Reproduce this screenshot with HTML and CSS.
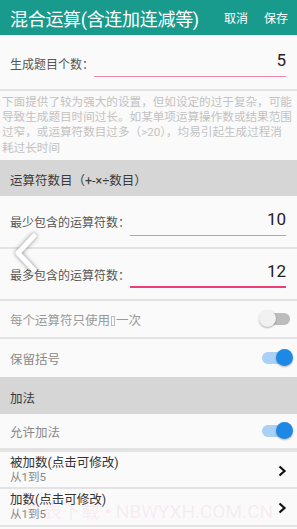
FILE: index.html
```html
<!DOCTYPE html>
<html lang="zh">
<head>
<meta charset="utf-8">
<link rel="stylesheet" href="styles.css">
</head>
<body>
<div class="page">
  <header class="header">
    <div class="title">混合运算(含连加连减等)</div>
    <div class="actions"><span>取消</span><span>保存</span></div>
  </header>

  <div class="field-row r1">
    <span class="label">生成题目个数：</span>
    <div class="input"><span>5</span></div>
  </div>

  <p class="note">下面提供了较为强大的设置，但如设定的过于复杂，可能<br>导致生成题目时间过长。如某单项运算操作数或结果范围<br>过窄，或运算符数目过多（&gt;20），均易引起生成过程消<br>耗过长时间</p>

  <div class="section s1">运算符数目（+-×÷数目）</div>

  <div class="field-row r2">
    <span class="label">最少包含的运算符数：</span>
    <div class="input"><span>10</span></div>
  </div>
  <div class="field-row r3">
    <span class="label">最多包含的运算符数：</span>
    <div class="input focus"><span>12</span></div>
  </div>

  <div class="toggle-row">
    <span class="tlabel light">每个运算符只使用<i class="tofu"></i>一次</span>
    <span class="switch off"><span class="track"></span><span class="thumb"></span></span>
  </div>
  <div class="toggle-row last">
    <span class="tlabel">保留括号</span>
    <span class="switch on"><span class="track"></span><span class="thumb"></span></span>
  </div>

  <div class="section s2">加法</div>

  <div class="toggle-row r-add">
    <span class="tlabel">允许加法</span>
    <span class="switch on"><span class="track"></span><span class="thumb"></span></span>
  </div>

  <div class="list-row l1">
    <div class="ltext">
      <div class="ltitle">被加数(点击可修改)</div>
      <div class="lsub">从1到5</div>
    </div>
    <svg class="chev" width="10" height="12" viewBox="0 0 10 12"><polyline points="2.5,1.5 7.5,6 2.5,10.5" fill="none" stroke="#111" stroke-width="2.2"/></svg>
  </div>
  <div class="list-row l2">
    <div class="ltext">
      <div class="ltitle">加数(点击可修改)</div>
      <div class="lsub">从1到5</div>
    </div>
    <svg class="chev" width="10" height="12" viewBox="0 0 10 12"><polyline points="2.5,1.5 7.5,6 2.5,10.5" fill="none" stroke="#111" stroke-width="2.2"/></svg>
  </div>

  <div class="watermark">牛表下载 • NBWYXH.COM.CN</div>
  <svg class="back" width="40" height="50" viewBox="0 0 40 50">
    <polyline points="30,8 14,25 30,42" fill="none" stroke="#fff" stroke-width="5" stroke-linecap="round" stroke-linejoin="round"/>
  </svg>
</div>
</body>
</html>
```

FILE: styles.css
```css
* { box-sizing: border-box; }
html, body { margin: 0; padding: 0; }
body {
  background: #fafafa;
  font-family: Roboto, "Noto Sans CJK SC", "Noto Sans", sans-serif;
  width: 297px;
  height: 529px;
  overflow: hidden;
}
.page { position: relative; width: 297px; height: 529px; overflow: hidden; background: #fafafa; }

.header {
  height: 35px;
  background: #189a8d;
  color: #fff;
  display: flex;
  align-items: center;
  justify-content: space-between;
  padding: 0 9px 0 10px;
}
.title { font-size: 18px; letter-spacing: -0.3px; }
.actions { display: flex; gap: 16px; font-size: 12px; }

.field-row {
  display: flex;
  align-items: center;
  padding: 0 11px 0 10px;
  border-bottom: 2px solid #e3e3e3;
}
.r1 { height: 56px; padding-top: 2px; }
.r2 { height: 53px; }
.r3 { height: 52px; }
.label { font-size: 12px; color: #555; white-space: nowrap; }
.input {
  flex: 1;
  height: 24px;
  margin-top: 4px;
  border-bottom: 1.5px solid #ea8aa8;
  display: flex;
  align-items: flex-start;
  justify-content: flex-end;
  font-size: 17px;
  color: #222;
  line-height: 20px;
}
.input span { margin-top: -3px; }
.input.focus { border-bottom: 2px solid #ec3f78; }

.note {
  margin: 0;
  height: 69px;
  padding: 4px 0 0 2px;
  font-size: 11.6px;
  line-height: 15.2px;
  color: #c2c2c2;
  white-space: nowrap;
}

.section {
  background: #d6d6d6;
  display: flex;
  align-items: center;
  padding: 0 10px;
  font-size: 12.5px;
  color: #3a3a3a;
}
.s1 { height: 36px; padding-top: 2px; }
.s2 { height: 37px; padding-top: 3px; }

.toggle-row {
  height: 38px;
  display: flex;
  align-items: center;
  justify-content: space-between;
  padding: 0 4px 0 10px;
  border-bottom: 2px solid #e3e3e3;
}
.toggle-row.last { border-bottom: none; }
.r-add { height: 36px; }
.tlabel { font-size: 12.5px; color: #8a8a8a; }
.tlabel.light { color: #999; }
.tofu {
  display: inline-block;
  width: 4px;
  height: 10px;
  border: 1px solid #bbb;
  margin: 0 1px;
  vertical-align: -1px;
}

.switch { position: relative; width: 34px; height: 18px; display: inline-block; }
.track {
  position: absolute;
  left: 3px; right: 3px; top: 3px;
  height: 12px;
  border-radius: 6px;
}
.thumb {
  position: absolute;
  top: 0;
  width: 17px;
  height: 17px;
  border-radius: 50%;
  box-shadow: 0 1px 2px rgba(0,0,0,0.3);
}
.switch.off .track { background: #bcbcbc; }
.switch.off .thumb { left: 0; background: #f1f1f1; }
.switch.on .track { background: #a9d0f5; }
.switch.on .thumb { right: 0; background: #1e88e5; }

.list-row {
  display: flex;
  align-items: center;
  justify-content: space-between;
  padding: 0 10px 0 10px;
  border-top: 2px solid #e3e3e3;
}
.l1 { height: 37px; }
.l2 { height: 40px; border-bottom: 2px solid #e3e3e3; }
.ltitle { font-size: 12.5px; color: #333; line-height: 15px; }
.lsub { font-size: 11.5px; color: #888; line-height: 15px; }
.chev { margin-top: 2px; }

.watermark {
  position: absolute;
  left: 24px;
  top: 496px;
  font-size: 19px;
  color: rgba(240, 120, 200, 0.12);
  white-space: nowrap;
  pointer-events: none;
}
.back {
  position: absolute;
  left: 4px;
  top: 228px;
  filter: drop-shadow(0 0 2px rgba(0,0,0,0.45));
}
```
